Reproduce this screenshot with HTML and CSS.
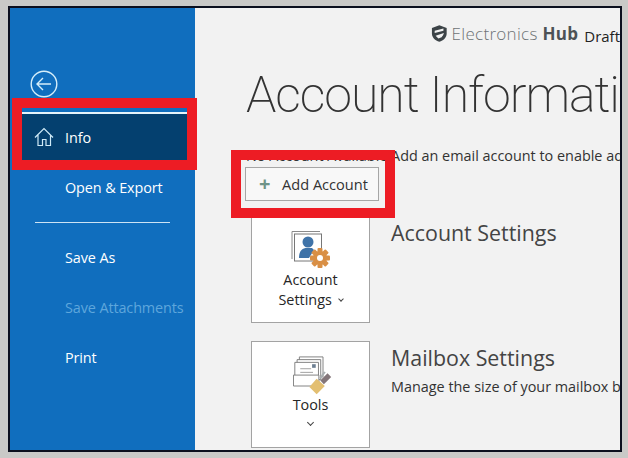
FILE: index.html
```html
<!DOCTYPE html>
<html lang="en">

<head>
    <meta charset="utf-8">
    <meta name="viewport" content="width=device-width, initial-scale=1.0">
    <title>Account Information</title>
    <link rel="stylesheet" href="styles.css">
</head>

<body>
    <div class="frame">
        <aside class="sidebar">
            <svg class="back" width="28" height="28" viewBox="0 0 28 28" fill="none" stroke="#d5eefa" stroke-width="1.4">
                <circle cx="14" cy="14" r="12.8" />
                <path d="M21 14H7M13 8l-6 6 6 6" />
            </svg>
            <nav class="side_menu">
                <a class="side_item valgt">
                    <svg width="20" height="20" viewBox="0 0 20 20" fill="none" stroke="#cfeaf7" stroke-width="1.2">
                        <path d="M1 10.5 10 1.5l9 9M4 8v10.5h4.5v-6h3.500v6h4.500V8" />
                    </svg>
                    Info
                </a>
                <a class="side_item">Open &amp; Export</a>
                <div class="side_line"></div>
                <a class="side_item">Save As</a>
                <a class="side_item dimmed">Save Attachments</a>
                <a class="side_item">Print</a>
            </nav>
        </aside>

        <main class="content">
            <div class="brand">
                <svg width="18" height="19" viewBox="0 0 18 19">
                    <path d="M1 3.5 9 .5l8 3v6c0 4.500-3.500 7.500-8 9-4.500-1.500-8-4.500-8-9z" fill="#3c4347" />
                    <path d="M4 6.500 13.500 4v2.500L4 9zM5 12l9-3c-.5 2-1.500 3.500-2.500 4.500L8 15z" fill="#f2f2f2" />
                </svg>
                <span class="brand_name">Electronics <b>Hub</b></span>
                <span class="draft">Draft</span>
            </div>

            <h1>Account Information</h1>
            <p class="intro">No Account Available Add an email account to enable additional features.</p>

            <button class="add_btn"><span class="plus">+</span>Add Account</button>

            <section class="row first">
                <div class="card">
                    <svg class="card_icon" width="44" height="40" viewBox="0 0 44 40">
                        <path d="M1 .5h28M1 .5V28" stroke="#8a8a8a" fill="none" />
                        <rect x="3.500" y="3" width="27" height="27" fill="#fff" stroke="#777" />
                        <circle cx="17" cy="11" r="5.500" fill="#3f73a8" />
                        <path d="M8 27c0-7 3-10 8-10h5l2 2-5 8z" fill="#3f73a8" />
                        <g fill="#d98f45">
                            <circle cx="29" cy="27" r="7" />
                            <rect x="26.500" y="17" width="5" height="20" rx="1" />
                            <rect x="19" y="24.500" width="20" height="5" rx="1" />
                            <rect x="26.500" y="17" width="5" height="20" rx="1" transform="rotate(45 29 27)" />
                            <rect x="26.500" y="17" width="5" height="20" rx="1" transform="rotate(-45 29 27)" />
                        </g>
                        <circle cx="29" cy="27" r="3" fill="#fff" />
                    </svg>
                    <span class="card_label">Account</span>
                    <span class="card_label">Settings <i class="chev small"></i></span>
                </div>
                <div class="row_text">
                    <h2>Account Settings</h2>
                </div>
            </section>

            <section class="row">
                <div class="card">
                    <svg class="card_icon tools" width="40" height="40" viewBox="0 0 44 44">
                        <path d="M7 1h26v22H7z" fill="#fff" stroke="#777" />
                        <path d="M4.500 4h26v22h-26z" fill="#fff" stroke="#777" />
                        <path d="M2 7h26v20H2z" fill="#fff" stroke="#777" />
                        <path d="M8 14h12M8 18h14" stroke="#999" />
                        <rect x="21" y="9" width="4" height="4" fill="#6d7f92" />
                        <path d="M.5 21h28v12H.5z" fill="#fff" stroke="#777" />
                        <path d="M18 34l8-9 9 8-9 9z" fill="#e3bf71" />
                        <path d="M30 27l8-8 4 4-8 8z" fill="#84767a" />
                        <path d="M29 24l5-7 2 1-5 7z" fill="#aab0b2" />
                    </svg>
                    <span class="card_label">Tools</span>
                    <i class="chev"></i>
                </div>
                <div class="row_text">
                    <h2>Mailbox Settings</h2>
                    <p>Manage the size of your mailbox by emptying Deleted Items and archiving.</p>
                </div>
            </section>
        </main>

        <!-- de roede markeringer ligger oven paa skaermbilledet -->
        <div class="mark mark_info"></div>
        <div class="mark mark_add"></div>
    </div>
</body>

</html>
```

FILE: styles.css
```css
* {
    box-sizing: border-box;
}

html,
body {
    height: 100%;
}

body {
    margin: 0;
    padding: 6px 6px 6px 8px;
    background-color: #c9c9c7;
    font-family: "Open Sans", "Liberation Sans", sans-serif;
    overflow: hidden;
}

.frame {
    position: relative;
    display: flex;
    height: 446px;
    border: 2px solid #0b0f1e;
    background-color: #f2f2f2;
}

/* sidebar */

.sidebar {
    width: 185px;
    flex: none;
    padding-top: 62px;
    background-color: #106ebe;
    color: #fff;
}

.back {
    display: block;
    margin-left: 20px;
}

.side_menu {
    margin-top: 14px;
}

.side_item {
    display: flex;
    align-items: center;
    height: 50px;
    padding-left: 55px;
    font-size: 14.4px;
    letter-spacing: -.1px;
}

.side_item.valgt {
    gap: 11px;
    width: 166px;
    height: 48px;
    margin: 0 0 2px 11px;
    padding-left: 13px;
    background-color: #04406f;
    border-top: 2px solid #e6f4fb;
}

.side_line {
    height: 1px;
    margin: 10px 25px 9px 25px;
    background-color: #cde3f4;
}

.dimmed {
    color: #5ea6dc;
}

/* indhold */

.content {
    position: relative;
    flex: 1;
    min-width: 0;
    padding: 0 0 0 50px;
    overflow: hidden;
    white-space: nowrap;
}

.brand {
    display: flex;
    align-items: center;
    height: 36px;
    margin-left: 186px;
    padding-top: 14px;
}

.brand_name {
    margin-left: 4px;
    font-size: 17px;
    font-weight: 300;
    color: #6e7275;
    letter-spacing: .3px;
}

.brand_name b {
    font-weight: 700;
    color: #4c5256;
}

.draft {
    margin: 6px 0 0 6px;
    font-size: 15px;
    color: #222;
}

h1 {
    margin: 20px 0 0 1px;
    font-family: Roboto, "Open Sans", sans-serif;
    font-size: 50px;
    line-height: 62px;
    font-weight: 200;
    letter-spacing: -1.05px;
    color: #333;
}

.intro {
    margin: 20px 0 0 1px;
    font-size: 14.4px;
    line-height: 20px;
    color: #333;
}

.add_btn {
    display: flex;
    align-items: center;
    width: 134px;
    height: 34px;
    margin: 1px 0 0 0;
    padding: 0 0 0 13px;
    border: 1px solid #a6a6a6;
    background-color: #f8f8f8;
    font-family: inherit;
    font-size: 14.6px;
    color: #333;
}

.plus {
    width: 23px;
    font-size: 20px;
    line-height: 18px;
    font-weight: 700;
    text-align: left;
    color: #6f9488;
}

.row {
    display: flex;
    margin: 18px 0 0 6px;
}

.row.first {
    margin-top: 15px;
}

.card {
    display: flex;
    flex-direction: column;
    align-items: center;
    flex: none;
    width: 119px;
    height: 107px;
    padding-top: 14px;
    border: 1px solid #a3a3a3;
    background-color: #fff;
}

.card_icon {
    margin: 0 0 -1px 4px;
}

.card_label {
    font-size: 14.4px;
    line-height: 20px;
    color: #262626;
}

.chev {
    display: block;
    width: 5px;
    height: 5px;
    margin-top: 5px;
    border-right: 1px solid #444;
    border-bottom: 1px solid #444;
    transform: rotate(45deg);
}

.chev.small {
    display: inline-block;
    width: 4px;
    height: 4px;
    margin: 0 0 4px 3px;
}

.row_text {
    padding: 2px 0 0 21px;
}

h2 {
    margin: 0;
    font-size: 21.4px;
    line-height: 30px;
    font-weight: 400;
    color: #444;
}

.row_text p {
    margin: 4px 0 0;
    font-size: 14.4px;
    line-height: 20px;
    color: #333;
}

/* roede markeringer */

.mark {
    position: absolute;
    border: 10px solid #ed1c24;
}

.mark_info {
    left: 2px;
    top: 90px;
    width: 185px;
    height: 72px;
}

.mark_add {
    left: 221px;
    top: 142px;
    width: 164px;
    height: 68px;
}
```
